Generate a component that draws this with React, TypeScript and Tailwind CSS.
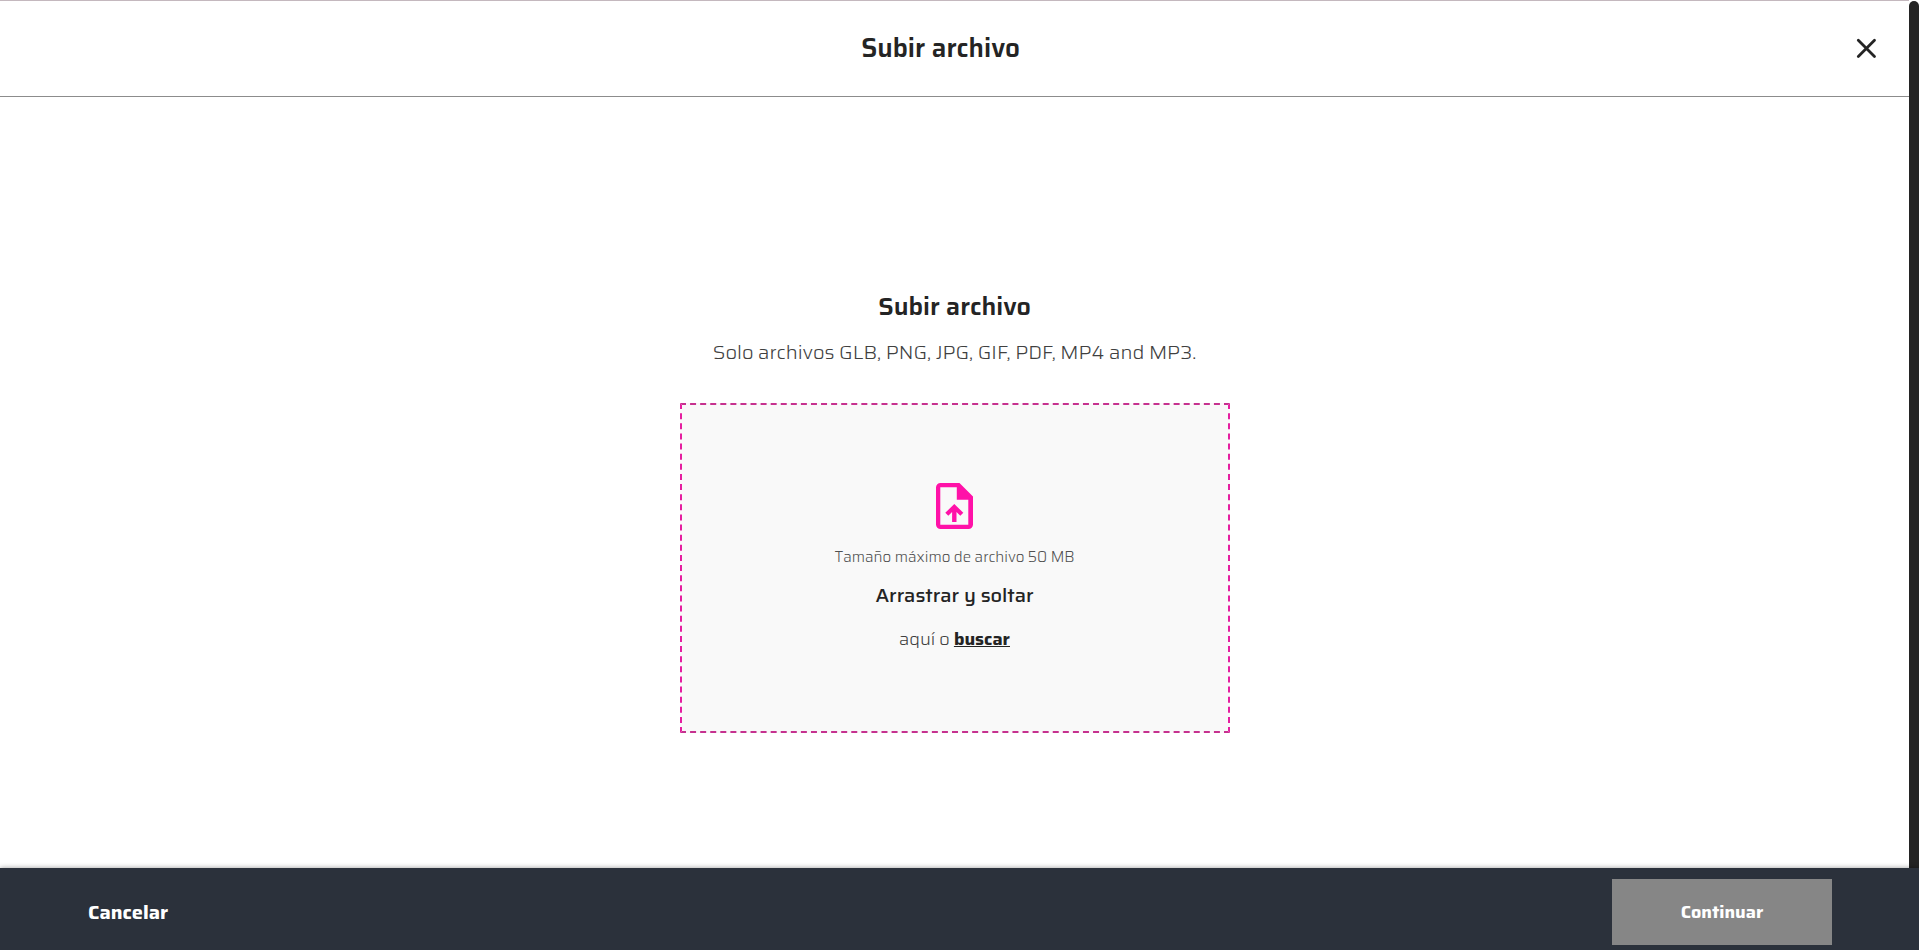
import { useRef } from "react";

function CloseIcon() {
  return (
    <svg viewBox="0 0 28 28" className="size-7" fill="none" stroke="#242424" strokeWidth="2.8" strokeLinecap="round" aria-hidden="true">
      <path d="M5.3 6.2 L21.5 22.4 M21.5 6.2 L5.3 22.4" />
    </svg>
  );
}

function UploadFileIcon() {
  return (
    <svg viewBox="0 0 37 46" className="h-[46px] w-[37px]" fill="#ff12a8" aria-hidden="true">
      <path
        fillRule="evenodd"
        d="M4.5 0H23.5L37 13.5V41.5A4.5 4.5 0 0 1 32.5 46H4.5A4.5 4.5 0 0 1 0 41.5V4.5A4.5 4.5 0 0 1 4.5 0Z M4.3 4.3V41.7H32.3V16.7H20.8V4.3Z"
      />
      <path d="M18.3 21L27.3 29.8L24.3 32.8L20.5 29V39H16.1V29L12.3 32.8L9.3 29.8Z" />
    </svg>
  );
}

export default function App() {
  const fileInput = useRef<HTMLInputElement>(null);

  return (
    <div className="flex h-screen flex-col bg-white font-[Saira,Inter,sans-serif] text-[#242424]">
      <div className="flex min-h-0 flex-1">
        <div className="flex min-w-0 flex-1 flex-col">
          <header className="flex items-center border-y border-t-[#c4b8be] border-b-[#8c8c8c] px-7 pt-[30px] pb-8">
            <h1 className="flex-1 text-center text-[26px]/[33px] font-semibold">Subir archivo</h1>
            <button type="button" aria-label="Cerrar">
              <CloseIcon />
            </button>
          </header>
          <main className="flex flex-1 flex-col items-center px-4 pt-[194px] text-center">
            <h2 className="text-[25px]/[32px] font-semibold">Subir archivo</h2>
            <p className="mt-[15px] text-xl/7 font-light text-[#404040]">
              Solo archivos GLB, PNG, JPG, GIF, PDF, MP4 and MP3.
            </p>
            <section className="mt-[37px] flex min-h-[330px] w-full max-w-[550px] flex-col items-center border-2 border-dashed border-x-[#e51fa0] border-y-[#c6318f] bg-[#f9f9f9] pt-[78px]">
              <UploadFileIcon />
              <p className="mt-4 text-[15px]/6 font-light text-[#505050]">Tamaño máximo de archivo 50 MB</p>
              <p className="mt-3 text-xl/7 font-medium">Arrastrar y soltar</p>
              <p className="mt-4 text-lg/7 font-light text-[#404040]">
                aquí o{" "}
                <button type="button" className="font-bold text-[#242424] underline" onClick={() => fileInput.current?.click()}>
                  buscar
                </button>
              </p>
              <input ref={fileInput} type="file" aria-label="Archivo" className="hidden" accept=".glb,.png,.jpg,.gif,.pdf,.mp4,.mp3" />
            </section>
          </main>
        </div>
        <div className="mt-px w-2.5 rounded-t-full bg-[#242424]" />
      </div>
      <footer className="flex items-center justify-between bg-[#2b313b] pt-[11px] pr-[87px] pb-[5px] pl-[88px] text-white shadow-[0_0_5px_rgba(0,0,0,0.4)]">
        <button type="button" className="text-xl font-bold">Cancelar</button>
        <button type="button" disabled className="h-[66px] w-[220px] bg-[#868686] text-lg font-bold">Continuar</button>
      </footer>
    </div>
  );
}
